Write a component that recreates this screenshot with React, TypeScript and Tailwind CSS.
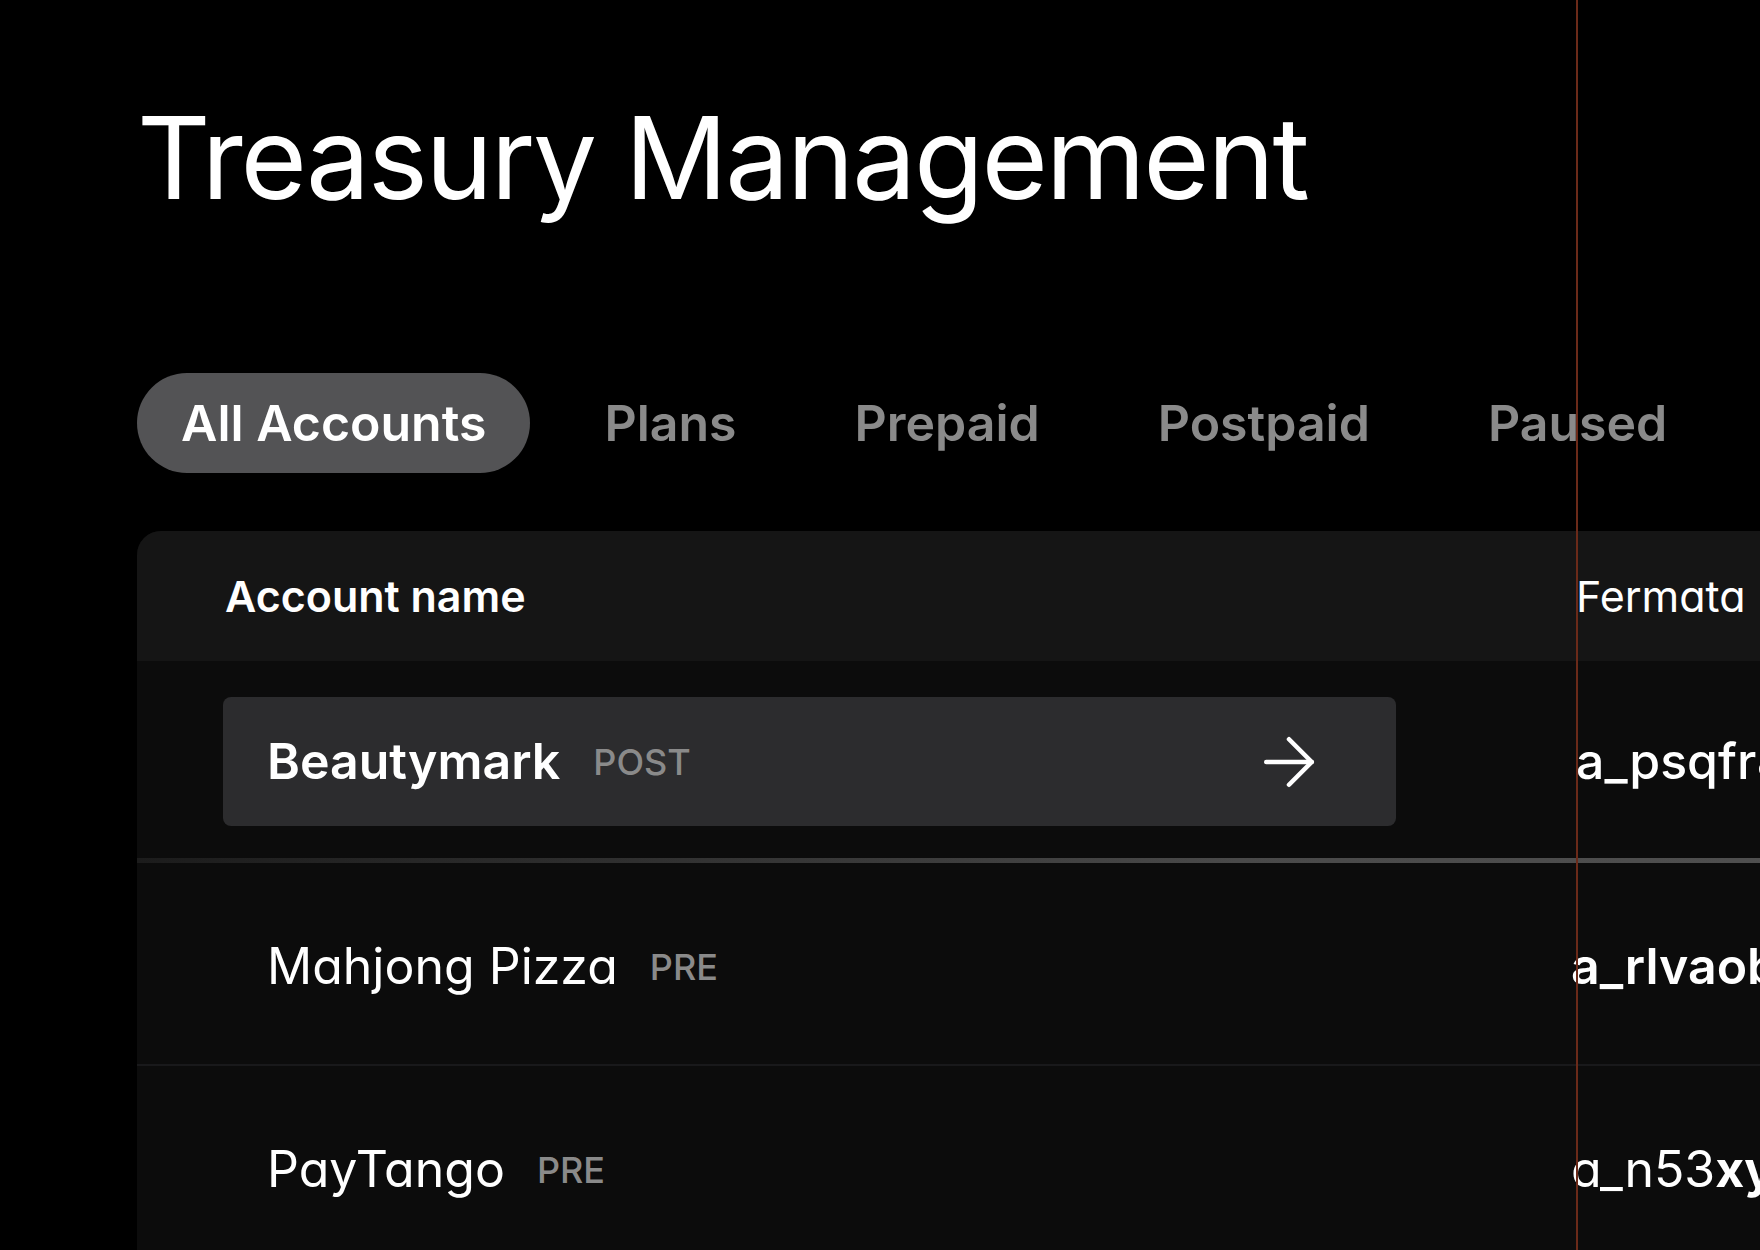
import { ArrowRight } from "lucide-react";

// ─── Data ─────────────────────────────────────────────────────────────────────

const tabs = ["All Accounts", "Plans", "Prepaid", "Postpaid", "Paused"];

// ─── Page ─────────────────────────────────────────────────────────────────────

export default function App() {
  return (
    <div className="relative min-h-screen w-full overflow-hidden bg-black font-['Inter',sans-serif] text-white">
      {/* Guide line overlay */}
      <div className="pointer-events-none absolute left-[1576px] top-0 z-10 h-full w-[2px] bg-[#6b2a19]" />

      <div className="pl-[137px] pt-[101px]">
        <h1 className="whitespace-nowrap text-[114px] font-normal leading-none tracking-[-0.02em]">
          Treasury Management
        </h1>

        {/* Tabs */}
        <div className="mt-[158px] flex items-center gap-[30px]">
          {tabs.map((tab, i) => (
            <div
              key={tab}
              className={`flex h-[100px] items-center rounded-full px-[44px] text-[50px] font-semibold whitespace-nowrap ${
                i === 0 ? "bg-[#535355] text-white" : "text-[#8a8a8a]"
              }`}
            >
              {tab}
            </div>
          ))}
        </div>

        {/* Table */}
        <div className="mt-[58px] w-[2200px] overflow-hidden rounded-t-[24px] bg-[#0c0c0c]">
          {/* Header */}
          <div className="flex h-[130px] items-center bg-[#151515] text-[43px] whitespace-nowrap">
            <div className="w-[1439px] shrink-0 pl-[88px] font-semibold">
              Account name
            </div>
            <div className="font-normal [font-feature-settings:'cv11']">
              Fermata ID
            </div>
          </div>

          {/* Row: selected */}
          <div className="flex h-[197px] items-center pt-[4px] whitespace-nowrap">
            <div className="w-[1439px] shrink-0 pl-[86px]">
              <div className="flex h-[129px] w-[1173px] items-center justify-between rounded-[8px] bg-[#2c2c2e] pl-[44px] pr-[82px]">
                <div className="flex items-center">
                  <span className="text-[50px] font-semibold">Beautymark</span>
                  <span className="ml-[33px] text-[36px] font-medium text-[#8a8a8a]">
                    POST
                  </span>
                </div>
                <ArrowRight size={78} strokeWidth={1.4} className="-mr-[14px]" />
              </div>
            </div>
            <div className="text-[50px] font-medium">a_psqfr8kd2m</div>
          </div>

          <div className="h-[5px] bg-gradient-to-r from-[#1c1c1c] via-[#4a4a4a] to-[#555555]" />

          {/* Row */}
          <div className="flex h-[203px] items-center border-b-2 border-[#19191b] pt-[6px] whitespace-nowrap">
            <div className="flex w-[1439px] shrink-0 items-center pl-[130px]">
              <span className="text-[50px] font-normal [font-feature-settings:'cv11']">
                Mahjong Pizza
              </span>
              <span className="ml-[32px] text-[36px] font-medium text-[#8a8a8a]">
                PRE
              </span>
            </div>
            <div className="-ml-[5px] text-[50px] font-semibold">a_rlvaob3qz</div>
          </div>

          {/* Row */}
          <div className="flex h-[201px] items-center pt-[6px] whitespace-nowrap">
            <div className="flex w-[1439px] shrink-0 items-center pl-[130px]">
              <span className="text-[50px] font-normal [font-feature-settings:'cv11']">
                PayTango
              </span>
              <span className="ml-[32px] text-[36px] font-medium text-[#8a8a8a]">
                PRE
              </span>
            </div>
            <div className="-ml-[5px] text-[50px] font-normal [font-feature-settings:'cv11']">
              a_n53<span className="font-bold">xy</span>7wpd
            </div>
          </div>
        </div>
      </div>
    </div>
  );
}
